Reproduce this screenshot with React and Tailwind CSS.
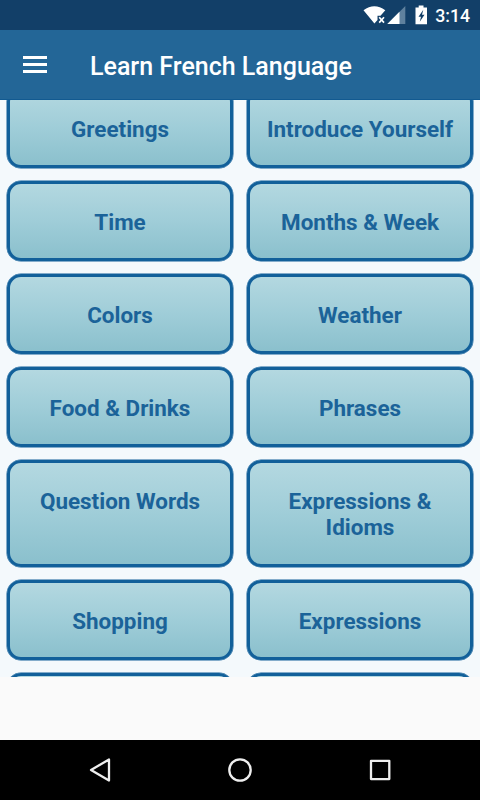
const topics = [
  ['Greetings', 'Introduce Yourself'],
  ['Time', 'Months & Week'],
  ['Colors', 'Weather'],
  ['Food & Drinks', 'Phrases'],
  ['Question Words', 'Expressions & Idioms'],
  ['Shopping', 'Expressions'],
  ['', ''],
];

function StatusBar() {
  return (
    <div className="flex h-[30px] shrink-0 items-center justify-end bg-[#123f68] pr-[10px] text-white">
      <svg width="68" height="30" viewBox="0 0 68 30" className="mr-[5px]" fill="none">
        <path d="M1.500 10.300Q12.300 2.200 23.300 10.300L18.500 15.800H15.500V20L12.400 23.500Z" fill="#fff" />
        <path d="M17.200 17.300L22 22.600M22 17.300L17.200 22.600" stroke="#fff" strokeWidth="1.700" />
        <path d="M43.300 6V24H25.300Z" fill="#5f819e" />
        <path d="M37.500 11.800V24H25.300Z" fill="#fff" />
        <path d="M56.700 5.500H61.500V7.500H65V24.300H53.500V7.500H56.700Z" fill="#fff" />
        <path d="M61.300 9.700L56.500 16.700H59L57.800 21.700L62.500 14.800H60Z" fill="#123f68" />
      </svg>
      <span className="mt-px text-[17.700px] leading-[30px] font-medium">3:14</span>
    </div>
  );
}

function AppBar() {
  return (
    <header className="flex h-[70px] shrink-0 items-center border-b border-[#125a91] bg-[#236697] text-white">
      <div className="mt-[-1px] ml-[23px] flex w-6 flex-col gap-1">
        <div className="h-[3px] bg-white" />
        <div className="h-[3px] bg-white" />
        <div className="h-[3px] bg-white" />
      </div>
      <h1 className="mt-[5px] ml-[43px] text-[25px] font-medium whitespace-nowrap">Learn French Language</h1>
    </header>
  );
}

function TopicButton({ label }) {
  return (
    <button className="flex min-h-20 items-start justify-center rounded-[14px] border-[3px] border-[#12609a] bg-linear-to-b from-[#b5d9e1] via-[#9fcdd8] to-[#89bfcc] bg-origin-border px-4 pt-[25px] text-center text-[22.450px] leading-[26px] font-bold text-[#1b6399] shadow-[0_0_0_0.5px_#12609a]">
      {label}
    </button>
  );
}

function NavBar() {
  return (
    <nav className="flex h-[60px] shrink-0 items-center justify-center bg-black">
      <svg width="480" height="60" viewBox="0 0 480 60" fill="none" stroke="#eee" strokeWidth="2.300" strokeLinejoin="round">
        <path d="M109 19.500V40.500L91 30Z" />
        <circle cx="240" cy="30" r="10.700" />
        <rect x="371" y="20.800" width="18.300" height="18.300" />
      </svg>
    </nav>
  );
}

export default function App() {
  return (
    <div className="flex h-[800px] w-[480px] flex-col overflow-hidden bg-[#fafafa] font-[Roboto,sans-serif]">
      <StatusBar />
      <AppBar />
      <main className="h-[577px] shrink-0 overflow-hidden bg-[#f4f9fc]">
        <div className="-mt-3 grid grid-cols-2 grid-rows-[80px_80px_80px_80px_107px_80px_80px] gap-x-[14px] gap-y-[13px] px-[7px]">
          {topics.flat().map((label, i) => (
            <TopicButton key={i} label={label} />
          ))}
        </div>
      </main>
      <div className="flex-1" />
      <NavBar />
    </div>
  );
}
